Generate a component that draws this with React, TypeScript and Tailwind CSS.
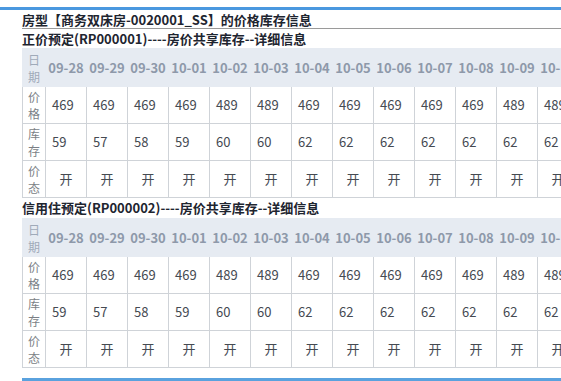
import React from 'react';

const dates = [
  '09-28', '09-29', '09-30', '10-01', '10-02', '10-03', '10-04', '10-05',
  '10-06', '10-07', '10-08', '10-09', '10-10', '10-11', '10-12',
];
const prices = [469, 469, 469, 469, 489, 489, 469, 469, 469, 469, 469, 489, 489, 489, 469];
const stocks = [59, 57, 58, 59, 60, 60, 62, 62, 62, 62, 62, 62, 62, 62, 62];

const Label: React.FC<{ a: string; b: string; head?: boolean }> = ({ a, b, head }) => (
  <div className={`text-center text-[12px] leading-[17px] ${head ? 'text-[#a0aab9]' : 'text-[#7b7f86]'}`}>
    {a}
    <br />
    {b}
  </div>
);

const PriceTable: React.FC = () => {
  return (
    <table className="table-fixed border-collapse w-[638px] text-[13px]">
      <colgroup>
        <col className="w-[23px]" />
        {dates.map((d) => (
          <col key={d} className="w-[41px]" />
        ))}
      </colgroup>
      <tbody>
        <tr className="h-[38px] bg-[#e6ebf2]">
          <td className="border border-[#e6ebf2] p-0">
            <Label a="日" b="期" head />
          </td>
          {dates.map((d) => (
            <td key={d} className="border border-[#e6ebf2] p-0 text-center font-bold text-[#8e99aa] whitespace-nowrap">
              {d}
            </td>
          ))}
        </tr>
        <tr className="h-[37px]">
          <td className="border border-[#cfd3d8] p-0">
            <Label a="价" b="格" />
          </td>
          {prices.map((p, i) => (
            <td key={i} className="border border-[#cfd3d8] pl-[6px] text-[#454a52]">
              {p}
            </td>
          ))}
        </tr>
        <tr className="h-[37px]">
          <td className="border border-[#cfd3d8] p-0">
            <Label a="库" b="存" />
          </td>
          {stocks.map((s, i) => (
            <td key={i} className="border border-[#cfd3d8] pl-[6px] text-[#454a52]">
              {s}
            </td>
          ))}
        </tr>
        <tr className="h-[37px]">
          <td className="border border-[#cfd3d8] p-0">
            <Label a="价" b="态" />
          </td>
          {dates.map((d) => (
            <td key={d} className="border border-[#cfd3d8] text-center text-[#454a52]">
              开
            </td>
          ))}
        </tr>
      </tbody>
    </table>
  );
};

const App: React.FC = () => {
  return (
    <div className="w-[561px] h-[381px] overflow-hidden bg-white font-['Noto_Sans_CJK_SC',sans-serif]">
      <div className="h-[7px]" />
      <div className="h-[3px] bg-[#4a98df]" />
      <div className="pl-[22px]">
        <div className="h-[19px] border-b border-[#9a9a9a] text-[13px] font-bold leading-[20px] text-[#1e2530] whitespace-nowrap">
          房型【商务双床房-0020001_SS】的价格库存信息
        </div>
        <div className="h-[19px] text-[13px] font-bold leading-[20px] text-[#1e2530] whitespace-nowrap">
          正价预定(RP000001)----房价共享库存--详细信息
        </div>
        <div className="overflow-hidden">
          <PriceTable />
        </div>
        <div className="h-[20px] text-[13px] font-bold leading-[20px] text-[#1e2530] whitespace-nowrap">
          信用住预定(RP000002)----房价共享库存--详细信息
        </div>
        <div className="overflow-hidden">
          <PriceTable />
        </div>
        <div className="h-[10px]" />
        <div className="h-[3px] bg-[#5aa2de]" />
      </div>
    </div>
  );
};

export default App;
